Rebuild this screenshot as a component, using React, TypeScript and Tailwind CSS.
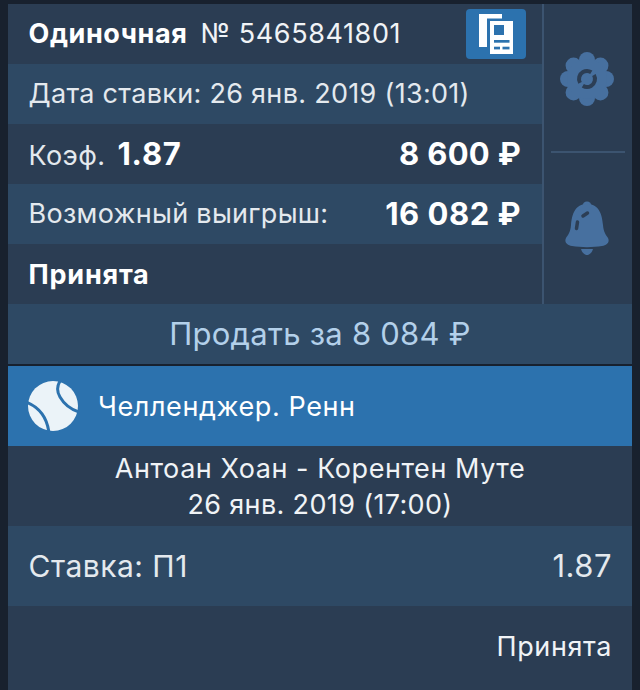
const F = { fontFamily: '"Inter", "Noto Sans", sans-serif' };

function CopyIcon() {
  return (
    <svg width="60" height="50" viewBox="0 0 60 50">
      <rect x="0" y="0" width="60" height="50" rx="4" fill="#2c72ae" />
      <path d="M13 5h23v4.500H21v28.500H13z" fill="#fff" />
      <rect x="24" y="12" width="23" height="33" fill="#fff" />
      <rect x="28" y="16" width="10" height="10" fill="#2c72ae" />
      <rect x="28" y="31" width="15.500" height="2.700" fill="#2c72ae" />
      <rect x="28" y="37.700" width="6" height="2.700" fill="#2c72ae" />
      <rect x="36.500" y="37.700" width="7" height="2.700" fill="#2c72ae" />
    </svg>
  );
}

function GearIcon() {
  const teeth = [0, 45, 90, 135, 180, 225, 270, 315];
  return (
    <svg width="54" height="54" viewBox="0 0 54 54">
      {teeth.map((a) => (
        <circle key={a} cx="27" cy="8" r="8" fill="#47709f" transform={`rotate(${a} 27 27)`} />
      ))}
      <circle cx="27" cy="27" r="20" fill="#47709f" />
      <circle cx="27" cy="27" r="8" fill="none" stroke="#2c3e55" strokeWidth="4" strokeDasharray="21 4.100" transform="rotate(-30 27 27)" />
    </svg>
  );
}

function BellIcon() {
  return (
    <svg width="44" height="56" viewBox="0 0 44 56">
      <circle cx="22" cy="5" r="4.500" fill="#47709f" />
      <path d="M22 3C10 3 7 13 6 24 5.500 31 3 34 1 37c-2 4 1 7 6 8 9 1.500 21 1.500 30 0 5-1 8-4 6-8-2-3-4.500-6-5-13C37 13 34 3 22 3Z" fill="#47709f" />
      <path d="M16 48h12c-1 3.500-3.500 6-6 6s-5-2.500-6-6Z" fill="#47709f" />
      <path d="M18 15l4.500-3" stroke="#2c3e55" strokeWidth="3.500" strokeLinecap="round" />
      <path d="M12.500 21l-1 6.500" stroke="#2c3e55" strokeWidth="3.500" strokeLinecap="round" />
    </svg>
  );
}

function BallIcon() {
  return (
    <svg width="50" height="50" viewBox="0 0 50 50">
      <circle cx="25" cy="25" r="25" fill="#ebf3f8" />
      <path d="M-1 21.500C10 26 19 36 21 52" fill="none" stroke="#2c72ae" strokeWidth="3" />
      <path d="M32 0C29 5 29 11 32 16 36 23 42 28 51 31" fill="none" stroke="#2c72ae" strokeWidth="3" />
    </svg>
  );
}

function Row({ tone, children }: { tone: "dark" | "light"; children: React.ReactNode }) {
  return (
    <div className={`flex h-[60px] items-center justify-between pl-[20.5px] pr-[21px] ${tone === "light" ? "bg-[#2e4964]" : "bg-[#2b3d53]"}`}>
      {children}
    </div>
  );
}

export default function App() {
  return (
    <div className="h-[690px] w-[640px] overflow-hidden bg-[#18212e] px-2 pt-1 text-white" style={F}>
      <div className="flex h-[300px]">
        <div className="w-[534px] shrink-0">
          <Row tone="dark">
            <div className="flex items-baseline text-[27px]">
              <span className="font-bold tracking-[0.6px]">Одиночная</span>
              <span className="ml-[13px] tracking-[0.6px] text-[#f0f3f6]">№ 5465841801</span>
            </div>
            <div className="-mr-[5px] mt-[-1px]">
              <CopyIcon />
            </div>
          </Row>
          <Row tone="light">
            <span className="pt-[1px] text-[27px] tracking-[0.3px] text-[#e4e9ee]">Дата ставки: 26 янв. 2019 (13:01)</span>
          </Row>
          <Row tone="dark">
            <div className="flex items-baseline">
              <span className="text-[27px] tracking-[0.4px] text-[#e4e9ee]">Коэф.</span>
              <span className="ml-[12px] text-[31px] font-bold tracking-[0.8px]">1.87</span>
            </div>
            <span className="text-[31px] font-bold tracking-[0.3px]">8 600 ₽</span>
          </Row>
          <Row tone="light">
            <span className="text-[27px] tracking-[0.3px] text-[#e4e9ee]">Возможный выигрыш:</span>
            <span className="text-[31px] font-bold tracking-[0.5px]">16 082 ₽</span>
          </Row>
          <Row tone="dark">
            <span className="pt-[2px] text-[27px] font-bold tracking-[0.8px]">Принята</span>
          </Row>
        </div>
        <div className="flex w-[90px] flex-col items-center border-l-2 border-[#3c5470] bg-[#2b3d53]">
          <div className="flex h-[149px] w-[74px] items-center justify-center border-b-2 border-[#3c5470] pr-[2px] pt-[2px]">
            <GearIcon />
          </div>
          <div className="flex flex-1 items-center justify-center pr-[2px] pt-[1px]">
            <BellIcon />
          </div>
        </div>
      </div>
      <div className="flex h-[60px] items-center justify-center bg-[#2e4964] text-[31px] tracking-[0.25px] text-[#b3d0ea]">
        Продать за 8 084 ₽
      </div>
      <div className="h-[2px] bg-[#18212e]" />
      <div className="flex h-[80px] items-center gap-[21px] bg-[#2c72ae] pl-[20px] text-[27px] tracking-[0.6px]">
        <BallIcon />
        <span className="-ml-[1px] pt-[2px]">Челленджер. Ренн</span>
      </div>
      <div className="flex h-[80px] flex-col items-center justify-center bg-[#2b3d53] pt-[2px] text-[27px] leading-[36px] text-[#f0f3f6]">
        <span className="tracking-[0.55px]">Антоан Хоан - Корентен Муте</span>
        <span className="tracking-[0.35px]">26 янв. 2019 (17:00)</span>
      </div>
      <div className="flex h-[80px] items-center justify-between bg-[#2e4964] pl-[20.5px] pr-[20px] text-[30px] tracking-[0.5px] text-[#e4e9ee]">
        <span>Ставка: П1</span>
        <span className="text-[31px]">1.87</span>
      </div>
      <div className="flex h-[84px] items-center justify-end bg-[#2b3d53] pb-[1px] pl-[21px] pr-[20px] text-[27px] tracking-[0.6px] text-[#f0f3f6]">
        Принята
      </div>
    </div>
  );
}
